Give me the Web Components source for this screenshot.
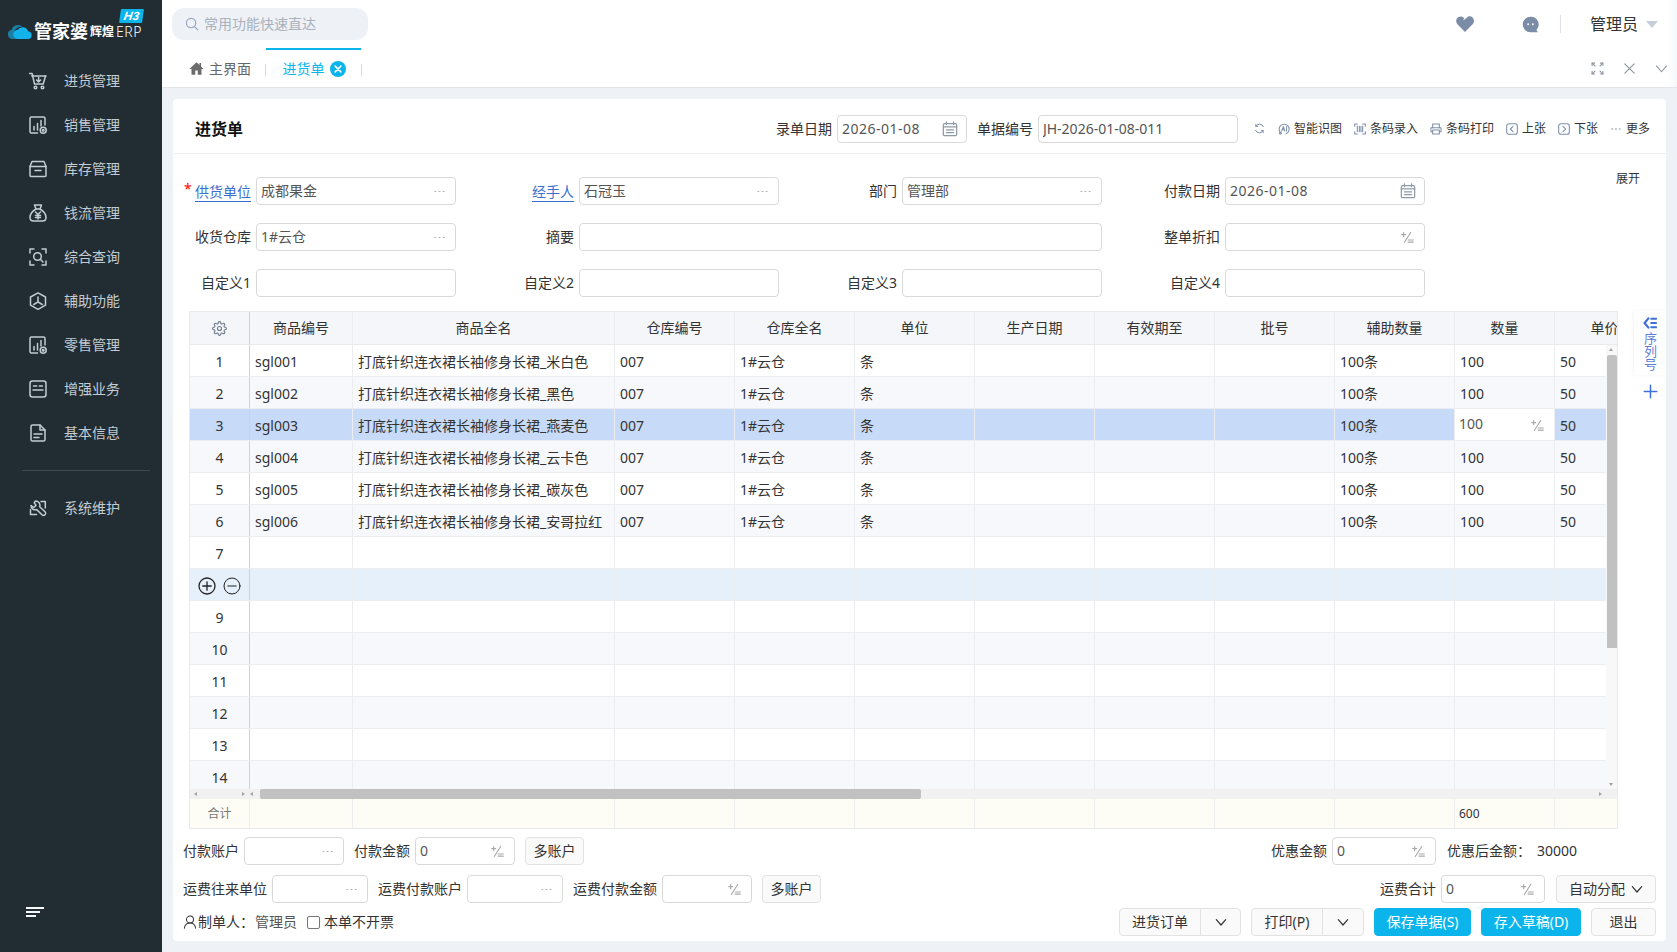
<!DOCTYPE html>
<html lang="zh-CN">
<head>
<meta charset="utf-8">
<title>进货单</title>
<style>
html, body { margin: 0; height: 100%; overflow: hidden; }
body {
	font: 14px/20px "Noto Sans", "Noto Sans CJK SC", sans-serif;
	color: #333;
	background: #eef1f6;
}
</style>
</head>
<body>
<erp-app>
	<side-nav slot="nav">
		<nav-item icon="cart">进货管理</nav-item>
		<nav-item icon="chart">销售管理</nav-item>
		<nav-item icon="box">库存管理</nav-item>
		<nav-item icon="bag">钱流管理</nav-item>
		<nav-item icon="scan">综合查询</nav-item>
		<nav-item icon="hex">辅助功能</nav-item>
		<nav-item icon="chart">零售管理</nav-item>
		<nav-item icon="panel">增强业务</nav-item>
		<nav-item icon="doc">基本信息</nav-item>
		<nav-item icon="wrench" slot="system">系统维护</nav-item>
	</side-nav>
	<top-bar slot="top"></top-bar>
	<tab-strip slot="top"></tab-strip>
	<bill-card slot="main">
		<bill-head slot="head"></bill-head>
		<bill-form slot="form"></bill-form>
		<data-grid slot="grid"></data-grid>
		<grid-side slot="side"></grid-side>
		<bill-foot slot="foot"></bill-foot>
	</bill-card>
</erp-app>

<script>
const ICONS = {
	cart: '<path d="M0.500 1.500h2.600l2.400 10.500h8.700L16.500 4"/><path d="M2.800 4H17"/><path d="M9.600 5.500v4M7.600 8l2 2 2-2"/><circle cx="6.500" cy="15.500" r="1.300"/><circle cx="13.500" cy="15.500" r="1.300"/>',
	chart: '<path d="M8.500 17H2.500A1.500 1.500 0 0 1 1 15.500V2.500A1.500 1.500 0 0 1 2.500 1h12A1.500 1.500 0 0 1 16 2.500V9"/><path d="M5 14v-3.500M8.500 14V7.500M12 10V4.500"/><circle cx="14.200" cy="14.200" r="3"/><circle cx="14.200" cy="14.200" r=".8"/>',
	box: '<path d="M1 6.500 3 1.500h12l2 5v9a1 1 0 0 1-1 1H2a1 1 0 0 1-1-1z"/><path d="M1 6.500h16M6 10.500h6"/>',
	bag: '<path d="M5.500 1h7l-1.500 4H7z"/><path d="M7 5C3.500 7 1 10.500 1 13.500 1 16 2.500 17 4.500 17h9c2 0 3.500-1 3.500-3.500C17 10.500 14.500 7 11 5"/><path d="M6.500 8 9 10.500 11.500 8M9 10.500V15M6.500 11.500h5M6.500 13.500h5"/>',
	scan: '<path d="M1 5V1h4M13 1h4v4M17 13v4h-4M5 17H1v-4"/><circle cx="8.500" cy="8.500" r="3.800"/><path d="m11.300 11.300 2.700 2.700"/>',
	hex: '<path d="M9 .8 16.500 5v8.200L9 17.300 1.500 13.200V5z"/><path d="M4.800 12.500 9 9.800l4.200 2.700M9 5v4.800"/>',
	panel: '<rect x="1" y="1" width="16" height="16" rx="2.500"/><path d="M4.500 6h3.200M10.300 6h3.200M4 10h10"/>',
	doc: '<path d="M11 1H3.500A1.500 1.500 0 0 0 2 2.500v13A1.500 1.500 0 0 0 3.500 17h11a1.500 1.500 0 0 0 1.500-1.500V6z"/><path d="M11 1v5h5M5 10h8M5 13.500h5"/>',
	wrench: '<path d="M6.500 2a4.300 4.300 0 0 1 4.200 5.700l5.300 5.100a2.100 2.100 0 0 1-3 3L7.700 10.600A4.300 4.300 0 0 1 2 6.500l2.800 2 2.200-2-1.800-2.800z"/><path d="M12 2.500h4.300V9M1.500 10.500v5h6"/>',
	gear: '<g transform="scale(.75)"><circle cx="12" cy="12" r="3.200"/><path d="M19.400 15a1.650 1.650 0 0 0 .33 1.820l.06.06a2 2 0 0 1 0 2.830 2 2 0 0 1-2.830 0l-.06-.06a1.650 1.650 0 0 0-1.820-.33 1.650 1.650 0 0 0-1 1.510V21a2 2 0 0 1-2 2 2 2 0 0 1-2-2v-.09A1.650 1.650 0 0 0 9 19.400a1.650 1.650 0 0 0-1.820.33l-.06.06a2 2 0 0 1-2.830 0 2 2 0 0 1 0-2.830l.06-.06a1.650 1.650 0 0 0 .33-1.820 1.650 1.650 0 0 0-1.510-1H3a2 2 0 0 1-2-2 2 2 0 0 1 2-2h.09A1.650 1.650 0 0 0 4.600 9a1.650 1.650 0 0 0-.33-1.820l-.06-.06a2 2 0 0 1 0-2.830 2 2 0 0 1 2.830 0l.06.06a1.650 1.650 0 0 0 1.820.33H9a1.650 1.650 0 0 0 1-1.510V3a2 2 0 0 1 2-2 2 2 0 0 1 2 2v.09a1.650 1.650 0 0 0 1 1.510 1.650 1.650 0 0 0 1.820-.33l.06-.06a2 2 0 0 1 2.830 0 2 2 0 0 1 0 2.830l-.06.06a1.650 1.650 0 0 0-.33 1.820V9a1.650 1.650 0 0 0 1.510 1H21a2 2 0 0 1 2 2 2 2 0 0 1-2 2h-.09a1.650 1.650 0 0 0-1.510 1z"/></g>',
	refresh: '<path d="M15.500 6A7 7 0 0 0 3 5.500M2.500 12A7 7 0 0 0 15 12.500"/><path d="M3 2v3.500h3.200M15 16v-3.500h-3.200"/>',
	ai: '<path d="M5 15.500A7.500 7.500 0 1 1 12 16.200"/><path d="M5.500 12 8 5.500l2.200 6.500M6.300 10h3.200M12.800 5.500V12"/><circle cx="3.500" cy="15.500" r="1.300"/>',
	barcode: '<path d="M1 5V1.500h4M13 1.500h4V5M17 13v3.500h-4M5 16.500H1V13"/><path d="M5 5v8M8 5v8M10.500 5v8M13 5v8"/>',
	printer: '<path d="M4 7V1.500h10V7"/><path d="M4 13H1.500V7h15v6H14"/><path d="M4 10.500h10v6H4z"/>',
	prev: '<rect x="1" y="1" width="16" height="16" rx="3.500"/><path d="M10.500 5 6.500 9l4 4"/>',
	next: '<rect x="1" y="1" width="16" height="16" rx="3.500"/><path d="M7.500 5l4 4-4 4"/>',
	dots: '<path d="M2.500 9h1.500M8.200 9h1.500M14 9h1.500"/>',
	calendar: '<rect x="1.500" y="3" width="15" height="13.500" rx="1.500"/><path d="M1.500 6.500h15M5 1v3M13 1v3M5 10h8M5 13h8"/>',
	pct: '<path d="M1 5h5.500M3.700 2.200v5.600M13.500 2 4.500 16M10 12.500h7M10 15.500h7"/>',
	home: '<path fill="currentColor" stroke="none" d="M9 1.500 0.500 9.500h2.500V16.500h4.500v-5h3v5H15V9.500h2.500L14.500 6.700V2.500h-2v2.300z"/>',
	x: '<path d="M2.500 2.500l13 13M15.500 2.500l-13 13"/>',
	chevron: '<path d="M2 5.500l7 8 7-8"/>',
	expand: '<path d="M1.500 1.500l4 4M16.500 1.500l-4 4M1.500 16.500l4-4M16.500 16.500l-4-4"/><path d="M1.500 5V1.500H5M13 1.500h3.500V5M16.500 13v3.500H13M5 16.500H1.500V13"/>',
	heart: '<path fill="currentColor" stroke="none" d="M9 17 1.400 9.300C-.4 7.300-.2 4 2 2.300 4 .8 6.600 1.200 8.200 3l-1 2.600 3.600-2.900C12.400 1 15 .8 16.600 2.600c1.800 2 1.700 4.800 0 6.700z"/>',
	chat: '<path fill="currentColor" stroke="none" d="M9 .8a8.200 8.200 0 1 0 0 16.400h7.800l-1.500-2.500A8.200 8.200 0 0 0 9 .8z"/><circle cx="6.500" cy="8.800" r="1" fill="#fff" stroke="none"/><circle cx="11.500" cy="8.800" r="1" fill="#fff" stroke="none"/>',
	search: '<circle cx="7.800" cy="7.800" r="6"/><path d="m12.300 12.300 4.200 4.200"/>',
	plusc: '<circle cx="9" cy="9" r="8"/><path d="M9 4.800v8.400M4.800 9h8.400"/>',
	minusc: '<circle cx="9" cy="9" r="8"/><path d="M4.800 9h8.400"/>',
	plus: '<path d="M9 1.500v15M1.500 9h15"/>',
	user: '<circle cx="9" cy="5.800" r="4.500"/><path d="M1.800 17c.4-4 3.300-6.700 7.200-6.700s6.800 2.700 7.200 6.700"/>',
	list: '<path d="M7 3 2 9l5 6" stroke-width="2.800"/><path d="M10.500 3.500H17M10.500 9H17M10.500 14.500H17" stroke-width="2.400"/>',
	menu: '<g stroke-linecap="butt"><path d="M0 5h18M0 9h14M0 13h10" stroke-width="2"/></g>'
};

// base class: set the shadow root once from a css and html string
class Shadowed extends HTMLElement {
	render(css, html) {
		if (!this.shadowRoot) this.attachShadow({mode: 'open'});
		this.shadowRoot.innerHTML = `<style>${css}</style>${html}`;
	}
}

class UiIcon extends Shadowed {
	connectedCallback() {
		const size = this.getAttribute('size') || 18;
		const sw = this.getAttribute('sw') || 1.5;
		this.render(`:host{display:inline-flex;flex:none;width:${size}px;height:${size}px}svg{display:block;width:100%;height:100%}`,
			`<svg viewBox="0 0 18 18" fill="none" stroke="currentColor" stroke-width="${sw}" stroke-linecap="round" stroke-linejoin="round">${ICONS[this.getAttribute('name')] || ''}</svg>`);
	}
}

class ErpApp extends Shadowed {
	constructor() {
		super();
		this.render(`
			:host{display:flex;width:1677px;height:952px}
			.nav{flex:none;width:162px}
			.right{flex:1;min-width:0;display:flex;flex-direction:column}
			main{flex:1;min-height:0;padding:11px 11px 11px 11px;display:flex}
		`, `
			<div class="nav"><slot name="nav"></slot></div>
			<div class="right"><slot name="top"></slot><main><slot name="main"></slot></main></div>
		`);
	}
}

class SideNav extends Shadowed {
	constructor() {
		super();
		this.render(`
			:host{display:flex;flex-direction:column;height:952px;background:#222c33;color:#c3ccd2}
			.logo{position:relative;flex:none;height:59px;display:flex;align-items:center;gap:2px;padding:2px 0 0 7px;box-sizing:border-box;color:#fff;white-space:nowrap}
			.logo svg{flex:none;width:25px;height:15px;margin-top:1px}
			.gjp{font-size:18px;line-height:22px;font-weight:700;letter-spacing:0}
			.hh{font-size:12px;font-weight:700;line-height:22px;margin-top:2px}
			.erp{font-size:14px;line-height:22px;letter-spacing:.5px;margin-top:2px;font-weight:300}
			.h3{position:absolute;left:120px;top:9px;width:23px;height:14px;background:#0cb4ec;color:#fff;font:italic 700 12px/14px "Liberation Sans",sans-serif;text-align:center;transform:skewX(-8deg);border-radius:1px}
			hr{flex:none;border:0;height:1px;background:#3c474f;margin:15px 12px 15px 22px}
			.foot{margin-top:auto;padding:0 0 26px 26px;color:#f4f6f7}
		`, `
			<div class="logo">
				<svg viewBox="0 0 27 16"><path fill="#1b7fa3" d="M6 16a5 5 0 0 1-1-9.900A7 7 0 0 1 17 3.500 6 6 0 0 0 12 16z"/><path fill="#12b3ea" d="M12 16a5 5 0 0 1-.5-10A6.500 6.500 0 0 1 23 8a4 4 0 0 1-1 8z"/></svg>
				<span class="gjp">管家婆</span><span class="hh">辉煌</span><span class="erp">ERP</span>
				<span class="h3">H3</span>
			</div>
			<slot></slot>
			<hr>
			<slot name="system"></slot>
			<div class="foot"><ui-icon name="menu" size="18"></ui-icon></div>
		`);
	}
}

class NavItem extends Shadowed {
	connectedCallback() {
		this.render(`
			:host{display:flex;align-items:center;gap:17px;height:44px;padding-left:29px;font-size:14px;color:#c3ccd2}
		`, `<ui-icon name="${this.getAttribute('icon')}" size="18"></ui-icon><slot></slot>`);
	}
}

class TopBar extends Shadowed {
	constructor() {
		super();
		this.render(`
			:host{display:flex;align-items:center;flex:none;height:48px;padding-left:10px;background:linear-gradient(90deg,#fff calc(100% - 10px),#f6f7f9)}
			.search{display:flex;align-items:center;gap:5px;width:196px;height:32px;box-sizing:border-box;padding-left:13px;background:#eef1f6;border-radius:12px;color:#a9b1bd}
			.search ui-icon{color:#96a5c0}
			.right{margin-left:auto;display:flex;align-items:center;color:#333}
			.sep{width:1px;height:18px;background:#dfe2e7;margin:0 29px 0 21px}
			.name{font-size:16px;color:#333}
			.caret{width:0;height:0;border:6px solid transparent;border-top:7px solid #c5cedb;border-bottom:0;margin:0 19px 0 8px}
			.icons{display:flex;align-items:center;gap:48px;color:#7b8ca6}
		`, `
			<div class="search"><ui-icon name="search" size="14"></ui-icon><span>常用功能快速直达</span></div>
			<div class="right">
				<div class="icons"><ui-icon name="heart" size="18"></ui-icon><ui-icon name="chat" size="17"></ui-icon></div>
				<span class="sep"></span>
				<span class="name">管理员</span><span class="caret"></span>
			</div>
		`);
	}
}

class TabStrip extends Shadowed {
	constructor() {
		super();
		this.render(`
			:host{display:flex;align-items:stretch;flex:none;height:39px;padding-left:27px;background:linear-gradient(90deg,#fff calc(100% - 10px),#f6f7f9);border-bottom:1px solid #e2e5ea}
			.tab{display:flex;align-items:center;gap:5px;color:#666;padding-top:2px}
			.home ui-icon{color:#6b6b6b}
			.sep{align-self:center;width:1px;height:12px;background:#d5d8de;margin-top:4px}
			.active{width:95px;box-sizing:border-box;justify-content:center;border-top:2px solid #0cb4ec;color:#0cb4ec;gap:5px;padding:0 0 0 1px}
			.close{width:16px;height:16px;border-radius:50%;background:#0cb4ec;color:#fff;display:flex;align-items:center;justify-content:center}
			.tools{margin-left:auto;display:flex;align-items:center;gap:19px;padding:2px 9px 0 0;color:#8b929c;height:37px}
		`, `
			<div class="tab home" style="margin-right:14px"><ui-icon name="home" size="15"></ui-icon><span>主界面</span></div>
			<span class="sep"></span>
			<div class="tab active"><span>进货单</span><span class="close"><ui-icon name="x" size="8" sw="3.500"></ui-icon></span></div>
			<span class="sep"></span>
			<div class="tools"><ui-icon name="expand" size="13"></ui-icon><ui-icon name="x" size="13"></ui-icon><ui-icon name="chevron" size="13"></ui-icon></div>
		`);
	}
}

class BillCard extends Shadowed {
	constructor() {
		super();
		this.render(`
			:host{display:flex;flex-direction:column;flex:1;min-width:0;background:#fff;border-radius:4px}
			.body{display:flex;align-items:flex-start;padding-left:16px}
		`, `
			<slot name="head"></slot>
			<slot name="form"></slot>
			<div class="body"><slot name="grid"></slot><slot name="side"></slot></div>
			<slot name="foot"></slot>
		`);
	}
}

class TextInput extends Shadowed {
	connectedCallback() {
		const suffix = this.getAttribute('suffix');
		const suffixHtml = {
			dots: '<span class="sfx"><ui-icon name="dots" size="13" sw="1.200"></ui-icon></span>',
			pct: '<span class="sfx pct"><ui-icon name="pct" size="13" sw="1.600"></ui-icon></span>',
			cal: '<span class="sfx cal"><ui-icon name="calendar" size="16" sw="1.400"></ui-icon></span>'
		}[suffix] || '';
		const value = this.getAttribute('value') || '';
		this.render(`
			:host{display:flex;align-items:center;box-sizing:border-box;height:28px;min-width:0;padding:0 9px 0 4px;background:#fff;border:1px solid #d9d9d9;border-radius:4px;color:#555}
			.val{flex:1;white-space:nowrap;overflow:hidden;letter-spacing:${/^\d{4}-/.test(value) ? '.5px' : '0'}}
			.sfx{flex:none;display:flex;color:#a8a8a8}
			.cal{color:#8f9aa8;margin-right:-1px}
			.pct{color:#aaa;margin-right:1px}
		`, `<span class="val">${value}</span>${suffixHtml}`);
	}
}

class FieldLabel extends Shadowed {
	connectedCallback() {
		const link = this.hasAttribute('link');
		this.render(`
			:host{position:relative;display:flex;align-items:center;justify-content:flex-end;height:28px;white-space:nowrap;color:#333}
			a{color:#3a6fd0;border-bottom:1px solid #3a6fd0;line-height:18px;margin-top:2px}
			.star{position:absolute;left:-1px;top:5px;color:#f00;font-size:14px;line-height:14px}
		`, `${this.hasAttribute('required') ? '<span class="star">*</span>' : ''}${link ? '<a><slot></slot></a>' : '<slot></slot>'}`);
	}
}

class ToolBtn extends Shadowed {
	connectedCallback() {
		this.render(`
			:host{display:inline-flex;align-items:center;gap:4px;font-size:12px;color:#333;white-space:nowrap}
			ui-icon{color:#7e90ac}
		`, `<ui-icon name="${this.getAttribute('icon')}" size="12" sw="1.600"></ui-icon><slot></slot>`);
	}
}

class BillHead extends Shadowed {
	constructor() {
		super();
		this.render(`
			:host{display:flex;align-items:center;flex:none;height:55px;box-sizing:border-box;padding:5px 16px 0 22px;border-bottom:1px solid #eff0f3}
			h1{margin:0;font-size:16px;font-weight:700;color:#111}
			.right{margin-left:auto;display:flex;align-items:center;gap:5px}
			.tools{display:flex;align-items:center;gap:12px;margin-left:11px}
			.refresh{color:#7e90ac;display:flex;margin-right:1px}
		`, `
			<h1>进货单</h1>
			<div class="right">
				<field-label>录单日期</field-label>
				<text-input style="width:130px" value="2026-01-08" suffix="cal"></text-input>
				<field-label style="margin-left:5px">单据编号</field-label>
				<text-input style="width:200px" value="JH-2026-01-08-011"></text-input>
				<div class="tools">
					<span class="refresh"><ui-icon name="refresh" size="11" sw="1.600"></ui-icon></span>
					<tool-btn icon="ai">智能识图</tool-btn>
					<tool-btn icon="barcode">条码录入</tool-btn>
					<tool-btn icon="printer">条码打印</tool-btn>
					<tool-btn icon="prev">上张</tool-btn>
					<tool-btn icon="next">下张</tool-btn>
					<tool-btn icon="dots">更多</tool-btn>
				</div>
			</div>
		`);
	}
}

class BillForm extends Shadowed {
	constructor() {
		super();
		this.render(`
			:host{display:flex;flex:none;align-items:flex-start;padding:23px 26px 14px 12px}
			.grid{display:grid;grid-template-columns:66px 200px 113px 200px 113px 200px 113px 200px;column-gap:5px;row-gap:18px;margin-right:auto}
			.wide{grid-column:span 3}
			.more{font-size:12px;line-height:24px;color:#333;margin-top:-10px}
		`, `
			<div class="grid">
				<field-label required link>供货单位</field-label><text-input value="成都果金" suffix="dots"></text-input>
				<field-label link>经手人</field-label><text-input value="石冠玉" suffix="dots"></text-input>
				<field-label>部门</field-label><text-input value="管理部" suffix="dots"></text-input>
				<field-label>付款日期</field-label><text-input value="2026-01-08" suffix="cal"></text-input>
				<field-label>收货仓库</field-label><text-input value="1#云仓" suffix="dots"></text-input>
				<field-label>摘要</field-label><text-input class="wide"></text-input>
				<field-label>整单折扣</field-label><text-input suffix="pct"></text-input>
				<field-label>自定义1</field-label><text-input></text-input>
				<field-label>自定义2</field-label><text-input></text-input>
				<field-label>自定义3</field-label><text-input></text-input>
				<field-label>自定义4</field-label><text-input></text-input>
			</div>
			<span class="more">展开</span>
		`);
	}
}

class DataGrid extends Shadowed {
	constructor() {
		super();
		const heads = ['', '商品编号', '商品全名', '仓库编号', '仓库全名', '单位', '生产日期', '有效期至', '批号', '辅助数量', '数量', '单价'];
		const goods = ['米白色', '黑色', '燕麦色', '云卡色', '碳灰色', '安哥拉红'];
		const headHtml = heads.map((h, i) => `<div class="c hd">${i ? h : '<ui-icon name="gear" size="15" sw="1.800" style="color:#6e7b8c"></ui-icon>'}</div>`).join('');
		let rowsHtml = '';
		for (let n = 1; n <= 14; n++) {
			const g = goods[n - 1];
			let cls = n % 2 ? '' : 'alt';
			if (n === 3) cls = 'sel';
			if (n === 8) cls = 'hover';
			const first = n === 8
				? '<div class="c idx ops"><ui-icon name="plusc" size="18" sw="1.300"></ui-icon><ui-icon name="minusc" size="18" sw="1"></ui-icon></div>'
				: `<div class="c idx">${n}</div>`;
			let cells;
			if (g) {
				const qty = n === 3
					? '<div class="c edit"><span>100</span><ui-icon name="pct" size="13" sw="1.600"></ui-icon></div>'
					: '<div class="c">100</div>';
				cells = [`sgl00${n}`, `打底针织连衣裙长袖修身长裙_${g}`, '007', '1#云仓', '条', '', '', '', '100条']
					.map(t => `<div class="c">${t}</div>`).join('') + qty + '<div class="c">50</div>';
			} else {
				cells = '<div class="c"></div>'.repeat(11);
			}
			rowsHtml += `<div class="r ${cls}">${first}${cells}</div>`;
		}
		const footHtml = heads.map((h, i) => `<div class="c">${i === 0 ? '<span class="sum">合计</span>' : i === 10 ? '<span class="total">600</span>' : ''}</div>`).join('');
		this.render(`
			:host{display:block;flex:none;width:1429px;box-sizing:border-box;border:1px solid #e8eaee;--cols:60px 103px 262px repeat(7,120px) 100px 100px}
			.r{display:grid;grid-template-columns:var(--cols);height:31px;border-bottom:1px solid #ebedf0}
			.head{height:32px;border-bottom:1px solid #e8eaee;background:#f5f6fa;overflow:hidden;display:grid;grid-template-columns:var(--cols)}
			.c{box-sizing:border-box;padding-left:5px;border-right:1px solid #ebedf0;display:flex;align-items:center;white-space:nowrap;overflow:hidden;min-width:0}
			.r .c{padding-top:2px}
			.hd{justify-content:center;padding:0}
			.hd:first-child,.idx{border-right:1px solid #cfd2d8}
			.idx{justify-content:center;padding-left:0}
			.ops{gap:7px;color:#222}
			.mid{display:flex;height:444px}
			.rows{flex:1;min-width:0;overflow:hidden}
			.alt{background:#f7f8fc}
			.sel{background:#c7daf7}
			.hover{background:#e6f0fb}
			.r .edit{background:#fff;justify-content:space-between;padding:0 10px 1px 4px;color:#555}
			.edit ui-icon{color:#aaa;margin-top:2px}
			.vbar{flex:none;width:11px;background:#f8f8f8;position:relative}
			.thumb-v{position:absolute;left:.5px;top:10px;width:10px;height:293px;background:#c1c1c1;border-radius:2px 2px 0 0}
			.up,.down{position:absolute;left:3px;width:0;height:0;border:2.500px solid transparent}
			.up{top:3px;border-bottom:3px solid #a3a3a3;border-top:0}
			.down{bottom:3px;border-top:3px solid #a3a3a3;border-bottom:0}
			.hbar{display:flex;align-items:center;height:10px;background:#f1f1f1;padding-left:4px}
			.l,.rt{flex:none;width:0;height:0;border:2.500px solid transparent}
			.l{border-right:3px solid #a3a3a3;border-left:0}
			.rt{border-left:3px solid #a3a3a3;border-right:0}
			.thumb-h{flex:none;height:10px;width:661px;background:#c1c1c1;border-radius:2px;margin-left:7px}
			.foot{display:grid;grid-template-columns:var(--cols);height:29px;background:#fdfdf6;overflow:hidden}
			.foot .c{padding:1px 0 0 4px}
			.foot .c:first-child{justify-content:center;padding:1px 0 0}
			.sum{font-size:12px;color:#777}
			.total{font-size:12px;color:#333}
		`, `
			<div class="head">${headHtml}</div>
			<div class="mid">
				<div class="rows">${rowsHtml}</div>
				<div class="vbar"><span class="up"></span><span class="thumb-v"></span><span class="down"></span></div>
			</div>
			<div class="hbar">
				<span class="l"></span><span class="rt" style="margin-left:45px"></span><span class="l" style="margin-left:5px"></span>
				<span class="thumb-h"></span><span class="rt" style="margin-left:678px"></span>
			</div>
			<div class="foot">${footHtml}</div>
		`);
	}
}

class GridSide extends Shadowed {
	constructor() {
		super();
		this.render(`
			:host{display:flex;flex-direction:column;align-items:center;flex:none;width:32px;margin-left:16px;color:#3f6fd8}
			.tab{display:flex;flex-direction:column;align-items:center;width:32px;height:64px;box-sizing:border-box;padding-top:5px;background:#fff;box-shadow:-1px 0 3px rgba(0,0,0,.05)}
			.tab ui-icon{margin-bottom:2px}
			.v{writing-mode:vertical-rl;font-size:13px;line-height:14px;color:#5f7fd8}
			.add{margin-top:9px;display:flex}
		`, `
			<div class="tab"><ui-icon name="list" size="14"></ui-icon><span class="v">序列号</span></div>
			<span class="add"><ui-icon name="plus" size="15" sw="1.800"></ui-icon></span>
		`);
	}
}

class UiButton extends Shadowed {
	connectedCallback() {
		const primary = this.hasAttribute('primary');
		this.render(`
			:host{display:inline-flex;align-items:center;justify-content:center;gap:6px;box-sizing:border-box;height:28px;border-radius:4px;white-space:nowrap;
				background:${primary ? '#0cb4ec' : '#fafafa'};color:${primary ? '#fff' : '#333'};border:1px solid ${primary ? '#0cb4ec' : '#e2e2e2'}}
		`, `<slot></slot>${this.hasAttribute('caret') ? '<ui-icon name="chevron" size="12" sw="1.800"></ui-icon>' : ''}`);
	}
}

class SplitButton extends Shadowed {
	connectedCallback() {
		this.render(`
			:host{display:inline-flex;box-sizing:border-box;height:28px;background:#fafafa;border:1px solid #e2e2e2;border-radius:4px;color:#333}
			.txt{display:flex;align-items:center;justify-content:center;width:${this.getAttribute('main')}px;border-right:1px solid #e2e2e2;white-space:nowrap}
			.arrow{display:flex;align-items:center;justify-content:center;flex:1}
		`, `<span class="txt"><slot></slot></span><span class="arrow"><ui-icon name="chevron" size="12" sw="1.800"></ui-icon></span>`);
	}
}

class BillFoot extends Shadowed {
	constructor() {
		super();
		this.render(`
			:host{display:flex;flex-direction:column;flex:none;padding:8px 10px 0 10px}
			.row{display:flex;align-items:center;height:28px;white-space:nowrap}
			.row + .row{margin-top:10px}
			.row.last{margin-top:5px}
			.push{margin-left:auto}
			field-label{margin-right:5px}
			.maker{display:flex;align-items:center;gap:1px;color:#333}
			.maker b{font-weight:400;color:#555}
			.check{width:13px;height:13px;box-sizing:border-box;border:1px solid #777;border-radius:2px;margin:0 4px 0 10px}
			.btns{display:flex;gap:10px;margin-left:auto}
		`, `
			<div class="row">
				<field-label>付款账户</field-label><text-input style="width:100px" suffix="dots"></text-input>
				<field-label style="margin-left:10px">付款金额</field-label><text-input style="width:100px" value="0" suffix="pct"></text-input>
				<ui-button style="width:59px;margin-left:10px">多账户</ui-button>
				<field-label class="push">优惠金额</field-label><text-input style="width:104px" value="0" suffix="pct"></text-input>
				<span style="margin-left:11px">优惠后金额：</span><span style="margin:0 79px 0 6px">30000</span>
			</div>
			<div class="row">
				<field-label>运费往来单位</field-label><text-input style="width:96px" suffix="dots"></text-input>
				<field-label style="margin-left:10px">运费付款账户</field-label><text-input style="width:96px" suffix="dots"></text-input>
				<field-label style="margin-left:10px">运费付款金额</field-label><text-input style="width:90px" suffix="pct"></text-input>
				<ui-button style="width:59px;margin-left:10px">多账户</ui-button>
				<field-label class="push">运费合计</field-label><text-input style="width:104px" value="0" suffix="pct"></text-input>
				<ui-button caret style="width:100px;margin-left:11px">自动分配</ui-button>
			</div>
			<div class="row last">
				<span class="maker"><ui-icon name="user" size="14" sw="1.300"></ui-icon><span>制单人：</span><b>管理员</b></span>
				<span class="check"></span><span>本单不开票</span>
				<div class="btns">
					<split-button main="80" style="width:122px">进货订单</split-button>
					<split-button main="70" style="width:113px">打印(P)</split-button>
					<ui-button primary style="width:97px">保存单据(S)</ui-button>
					<ui-button primary style="width:100px">存入草稿(D)</ui-button>
					<ui-button style="width:65px">退出</ui-button>
				</div>
			</div>
		`);
	}
}

customElements.define('ui-icon', UiIcon);
customElements.define('erp-app', ErpApp);
customElements.define('side-nav', SideNav);
customElements.define('nav-item', NavItem);
customElements.define('top-bar', TopBar);
customElements.define('tab-strip', TabStrip);
customElements.define('bill-card', BillCard);
customElements.define('text-input', TextInput);
customElements.define('field-label', FieldLabel);
customElements.define('tool-btn', ToolBtn);
customElements.define('bill-head', BillHead);
customElements.define('bill-form', BillForm);
customElements.define('data-grid', DataGrid);
customElements.define('grid-side', GridSide);
customElements.define('ui-button', UiButton);
customElements.define('split-button', SplitButton);
customElements.define('bill-foot', BillFoot);
</script>
</body>
</html>
